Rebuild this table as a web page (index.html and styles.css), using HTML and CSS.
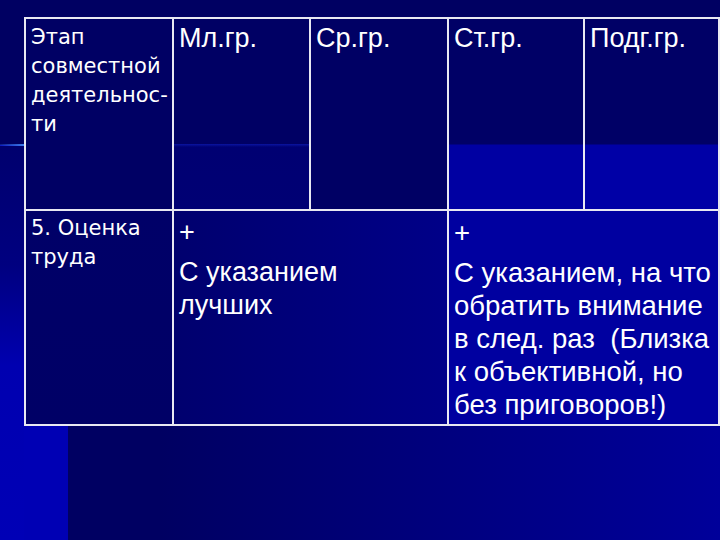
FILE: index.html
```html
<!DOCTYPE html>
<html lang="ru">
<head>
<meta charset="utf-8">
<title>Оценка труда</title>
<link rel="stylesheet" href="styles.css">
</head>
<body>
<div class="slide">
  <div class="accent-line"></div>
  <div class="table">
    <div class="cell stage c1">Этап<br>совместной<br>деятельнос-<br>ти</div>
    <div class="cell head c2">Мл.гр.</div>
    <div class="cell head c3">Ср.гр.</div>
    <div class="cell head c4">Ст.гр.</div>
    <div class="cell head c5">Подг.гр.</div>

    <div class="cell stage r2c1">5. Оценка<br>труда</div>
    <div class="cell body r2c2">
      <div class="plus">+</div>
      <div>С указанием<br>лучших</div>
    </div>
    <div class="cell body r2c3">
      <div class="plus">+</div>
      <div>С указанием, на что<br>обратить внимание<br>в след. раз&nbsp; (Близка<br>к объективной, но<br>без приговоров!)</div>
    </div>
  </div>
</div>
</body>
</html>
```

FILE: styles.css
```css
html, body {
  margin: 0;
  padding: 0;
}

body {
  width: 720px;
  height: 540px;
  overflow: hidden;
  background: #000062;
}

.slide {
  position: relative;
  width: 720px;
  height: 540px;
  box-sizing: border-box;
  padding: 17px 0 0 24px;
  background:
    linear-gradient(to bottom, #000062 0, #000062 145px, transparent 145px),
    linear-gradient(to right, #0000b4 0, #0000b4 68px, #000062 68px, #000062 160px, #00009a 720px);
}

.slide::before {
  content: "";
  position: absolute;
  left: 0;
  top: 146px;
  width: 24px;
  height: 394px;
  background: linear-gradient(to bottom, #00006e 0, #000080 120px, #0000b0 220px, #0000b6 394px);
}

.accent-line {
  position: absolute;
  left: 0;
  top: 144px;
  width: 24px;
  height: 2px;
  background: linear-gradient(to right, rgba(40, 90, 220, 0.3), #3c7cf0);
}

.table {
  position: relative;
  display: grid;
  grid-template-columns: 146px 135px 136px 134px 133px;
  grid-template-rows: 190px 213px;
  gap: 2px;
  padding: 2px;
  width: 696px;
  box-sizing: border-box;
  background: #e8e8f2;
}

.cell {
  box-sizing: border-box;
  color: #ffffff;
  white-space: nowrap;
  overflow: hidden;
}

.stage {
  font-family: "DejaVu Sans", Verdana, sans-serif;
  font-size: 21px;
  line-height: 29px;
  padding: 4px 0 0 5px;
}

.head {
  font-family: "Liberation Sans", Arial, sans-serif;
  font-size: 27px;
  line-height: 33px;
  padding: 3px 0 0 5px;
}

.body {
  font-family: "Liberation Sans", Arial, sans-serif;
  font-size: 27px;
  line-height: 33px;
  padding: 5px 0 0 5px;
}

.r2c3.body {
  font-size: 27.5px;
}

.plus {
  margin-bottom: 7px;
}

.c1 {
  background: #000064;
}

.c2 {
  background: linear-gradient(to bottom, #000064 0, #000064 125px, #0a14a0 125px, #000072 128px, #000074 190px);
}

.c3 {
  background: #000064;
}

.c4 {
  background: linear-gradient(to bottom, #000066 0, #000066 125px, #0000a2 126px, #0000a2 190px);
}

.c5 {
  background: linear-gradient(to bottom, #000066 0, #000066 125px, #0000a6 126px, #0000a6 190px);
}

.r2c1 {
  background: linear-gradient(to bottom, #000068, #000066);
  padding-top: 3px;
}

.r2c2 {
  grid-column: span 2;
  background: linear-gradient(to right, #00006e, #000088);
}

.r2c3 {
  grid-column: span 2;
  background: #0000a0;
}
```
